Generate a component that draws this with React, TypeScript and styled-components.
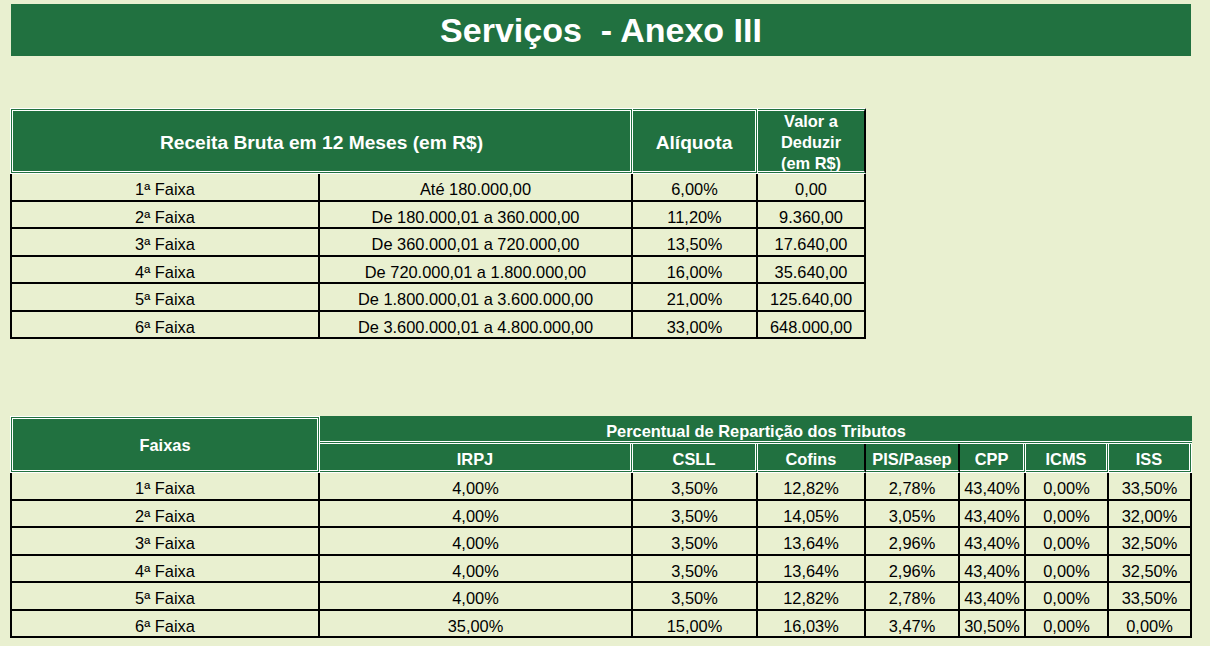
import React, { ReactElement } from 'react';
import styled, { createGlobalStyle } from 'styled-components';

const GREEN = '#217140';
const PAPER = '#e9f0d0';
const DOUBLE = '3px double #fff';
const SOLID = '2px solid #000';

type Edge = 'double' | 'solid' | 'none';

const edge = (e: Edge = 'none') =>
  e === 'double' ? DOUBLE : e === 'solid' ? SOLID : 'none';

const Global = createGlobalStyle`
  html, body {
    margin: 0;
    background: ${PAPER};
    font-family: "Liberation Sans", Arial, sans-serif;
  }
  * {
    box-sizing: border-box;
  }
`;

const Page = styled.div`
  width: 1210px;
  min-height: 646px;
  padding-top: 4px;
  display: flex;
  flex-direction: column;
`;

const TitleBar = styled.h1`
  margin: 0 0 0 11px;
  width: 1180px;
  height: 52px;
  display: flex;
  align-items: center;
  justify-content: center;
  background: ${GREEN};
  color: #fff;
  font-size: 34px;
  font-weight: bold;
  white-space: pre;
`;

const Sheet = styled.div<{ $cols: string; $rows: string; $gap: number }>`
  display: grid;
  width: max-content;
  margin: ${(p) => p.$gap}px 0 0 10px;
  grid-template-columns: ${(p) => p.$cols};
  grid-template-rows: ${(p) => p.$rows};
`;

// header cells sit a little low, like Excel's bottom-ish alignment
const HeadCell = styled.div<{
  $col?: string;
  $row?: string;
  $left?: boolean;
  $noTop?: boolean;
  $right?: Edge;
  $big?: boolean;
  $low?: boolean;
}>`
  grid-column: ${(p) => p.$col ?? 'auto'};
  grid-row: ${(p) => p.$row ?? 'auto'};
  display: flex;
  align-items: center;
  justify-content: center;
  text-align: center;
  padding-top: ${(p) => (p.$low ? 5 : 2)}px;
  background: ${GREEN};
  color: #fff;
  font-weight: bold;
  font-size: ${(p) => (p.$big ? '19.2px' : '16.4px')};
  line-height: 21px;
  border-top: ${(p) => (p.$noTop ? 'none' : DOUBLE)};
  border-bottom: ${DOUBLE};
  border-left: ${(p) => (p.$left ? DOUBLE : 'none')};
  border-right: ${(p) => edge(p.$right)};
`;

const DataCell = styled.div<{ $first?: boolean }>`
  display: flex;
  align-items: center;
  justify-content: center;
  padding-top: 6px;
  font-size: 16.4px;
  color: #000;
  border-right: ${SOLID};
  border-bottom: ${SOLID};
  border-left: ${(p) => (p.$first ? SOLID : 'none')};
`;

const aliquotas: string[][] = [
  ['1ª Faixa', 'Até 180.000,00', '6,00%', '0,00'],
  ['2ª Faixa', 'De 180.000,01 a 360.000,00', '11,20%', '9.360,00'],
  ['3ª Faixa', 'De 360.000,01 a 720.000,00', '13,50%', '17.640,00'],
  ['4ª Faixa', 'De 720.000,01 a 1.800.000,00', '16,00%', '35.640,00'],
  ['5ª Faixa', 'De 1.800.000,01 a 3.600.000,00', '21,00%', '125.640,00'],
  ['6ª Faixa', 'De 3.600.000,01 a 4.800.000,00', '33,00%', '648.000,00'],
];

const reparticao: string[][] = [
  ['1ª Faixa', '4,00%', '3,50%', '12,82%', '2,78%', '43,40%', '0,00%', '33,50%'],
  ['2ª Faixa', '4,00%', '3,50%', '14,05%', '3,05%', '43,40%', '0,00%', '32,00%'],
  ['3ª Faixa', '4,00%', '3,50%', '13,64%', '2,96%', '43,40%', '0,00%', '32,50%'],
  ['4ª Faixa', '4,00%', '3,50%', '13,64%', '2,96%', '43,40%', '0,00%', '32,50%'],
  ['5ª Faixa', '4,00%', '3,50%', '12,82%', '2,78%', '43,40%', '0,00%', '33,50%'],
  ['6ª Faixa', '35,00%', '15,00%', '16,03%', '3,47%', '30,50%', '0,00%', '0,00%'],
];

const tributos: { label: string; right: Edge }[] = [
  { label: 'IRPJ', right: 'double' },
  { label: 'CSLL', right: 'double' },
  { label: 'Cofins', right: 'solid' },
  { label: 'PIS/Pasep', right: 'solid' },
  { label: 'CPP', right: 'double' },
  { label: 'ICMS', right: 'double' },
  { label: 'ISS', right: 'double' },
];

const renderRows = (rows: string[][]) =>
  rows.map((row) =>
    row.map((value, i) => (
      <DataCell key={`${row[0]}-${i}`} $first={i === 0}>
        {value}
      </DataCell>
    ))
  );

export default function App(): ReactElement {
  return (
    <Page>
      <Global />
      <TitleBar>{'Serviços  - Anexo III'}</TitleBar>

      <Sheet $gap={52} $cols="310px 313px 125px 108px" $rows="66px repeat(6, 27.5px)">
        <HeadCell $col="span 2" $left $right="double" $big>
          Receita Bruta em 12 Meses (em R$)
        </HeadCell>
        <HeadCell $right="double" $big>
          Alíquota
        </HeadCell>
        <HeadCell $right="solid">
          Valor a
          <br />
          Deduzir
          <br />
          (em R$)
        </HeadCell>
        {renderRows(aliquotas)}
      </Sheet>

      <Sheet
        $gap={77}
        $cols="310px 313px 125px 108px 94px 66px 83px 83px"
        $rows="28px 29px repeat(6, 27.5px)"
      >
        <HeadCell $col="1" $row="1 / 3" $left $right="double">
          Faixas
        </HeadCell>
        <HeadCell $col="2 / 9" $row="1" $noTop $low>
          Percentual de Repartição dos Tributos
        </HeadCell>
        {tributos.map((t) => (
          <HeadCell key={t.label} $row="2" $noTop $low $right={t.right}>
            {t.label}
          </HeadCell>
        ))}
        {renderRows(reparticao)}
      </Sheet>
    </Page>
  );
}
